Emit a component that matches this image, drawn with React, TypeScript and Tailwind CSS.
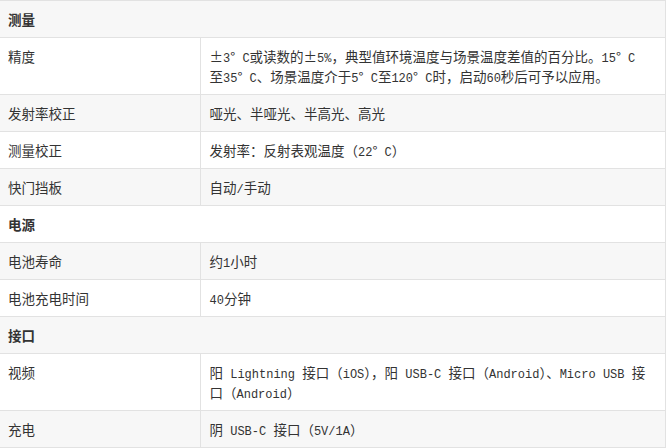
import { Fragment } from "react";

type Row =
  | { kind: "section"; title: string }
  | { kind: "item"; label: string; value: string[] };

const ROWS: Row[] = [
  { kind: "section", title: "测量" },
  {
    kind: "item",
    label: "精度",
    value: [
      "±3° C或读数的±5%，典型值环境温度与场景温度差值的百分比。15° C",
      "至35° C、场景温度介于5° C至120° C时，启动60秒后可予以应用。",
    ],
  },
  { kind: "item", label: "发射率校正", value: ["哑光、半哑光、半高光、高光"] },
  { kind: "item", label: "测量校正", value: ["发射率：反射表观温度（22° C）"] },
  { kind: "item", label: "快门挡板", value: ["自动/手动"] },
  { kind: "section", title: "电源" },
  { kind: "item", label: "电池寿命", value: ["约1小时"] },
  { kind: "item", label: "电池充电时间", value: ["40分钟"] },
  { kind: "section", title: "接口" },
  {
    kind: "item",
    label: "视频",
    value: [
      "阳 Lightning 接口（iOS），阳 USB-C 接口（Android）、Micro USB 接",
      "口（Android）",
    ],
  },
  { kind: "item", label: "充电", value: ["阴 USB-C 接口（5V/1A）"] },
];

// latin runs get the narrow mono face, like the half-width glyphs in the shot
function Txt({ s }: { s: string }) {
  const parts = s.split(/([\x20-\x7E]+)/);
  return (
    <>
      {parts.map((p, i) =>
        /^[\x20-\x7E]+$/.test(p) ? (
          <span key={i} className="font-['Liberation_Mono',monospace] text-[12px] leading-none whitespace-pre">
            {p}
          </span>
        ) : (
          <Fragment key={i}>{p}</Fragment>
        )
      )}
    </>
  );
}

export default function App() {
  return (
    <div className="w-[667px] h-[448px] bg-white overflow-hidden">
      <table className="w-[666px] border-collapse text-[13.5px] text-[#333] font-['Noto_Sans_CJK_SC','Noto_Sans',sans-serif]">
        <tbody>
          {ROWS.map((r, i) => {
            const bg = i % 2 === 0 ? "bg-[#f7f7f7]" : "bg-white";
            if (r.kind === "section") {
              return (
                <tr key={i} className={`${bg} border-t border-b border-[#e2e2e2]`}>
                  <td colSpan={2} className="pl-2 py-2 p-0 border-r border-[#e2e2e2]">
                    <div className="h-[20px] leading-[20px] font-bold">{r.title}</div>
                  </td>
                </tr>
              );
            }
            return (
              <tr key={i} className={`${bg} border-b border-[#e2e2e2]`}>
                <td className="w-[200px] pl-2 py-2 align-top border-r border-[#e2e2e2]">
                  <div className="h-[20px] leading-[20px]">{r.label}</div>
                </td>
                <td className="pl-[9px] py-2 align-top whitespace-nowrap border-r border-[#e2e2e2]">
                  {r.value.map((line, j) => (
                    <div key={j} className="h-[20px] leading-[20px] overflow-visible">
                      <Txt s={line} />
                    </div>
                  ))}
                </td>
              </tr>
            );
          })}
        </tbody>
      </table>
    </div>
  );
}
